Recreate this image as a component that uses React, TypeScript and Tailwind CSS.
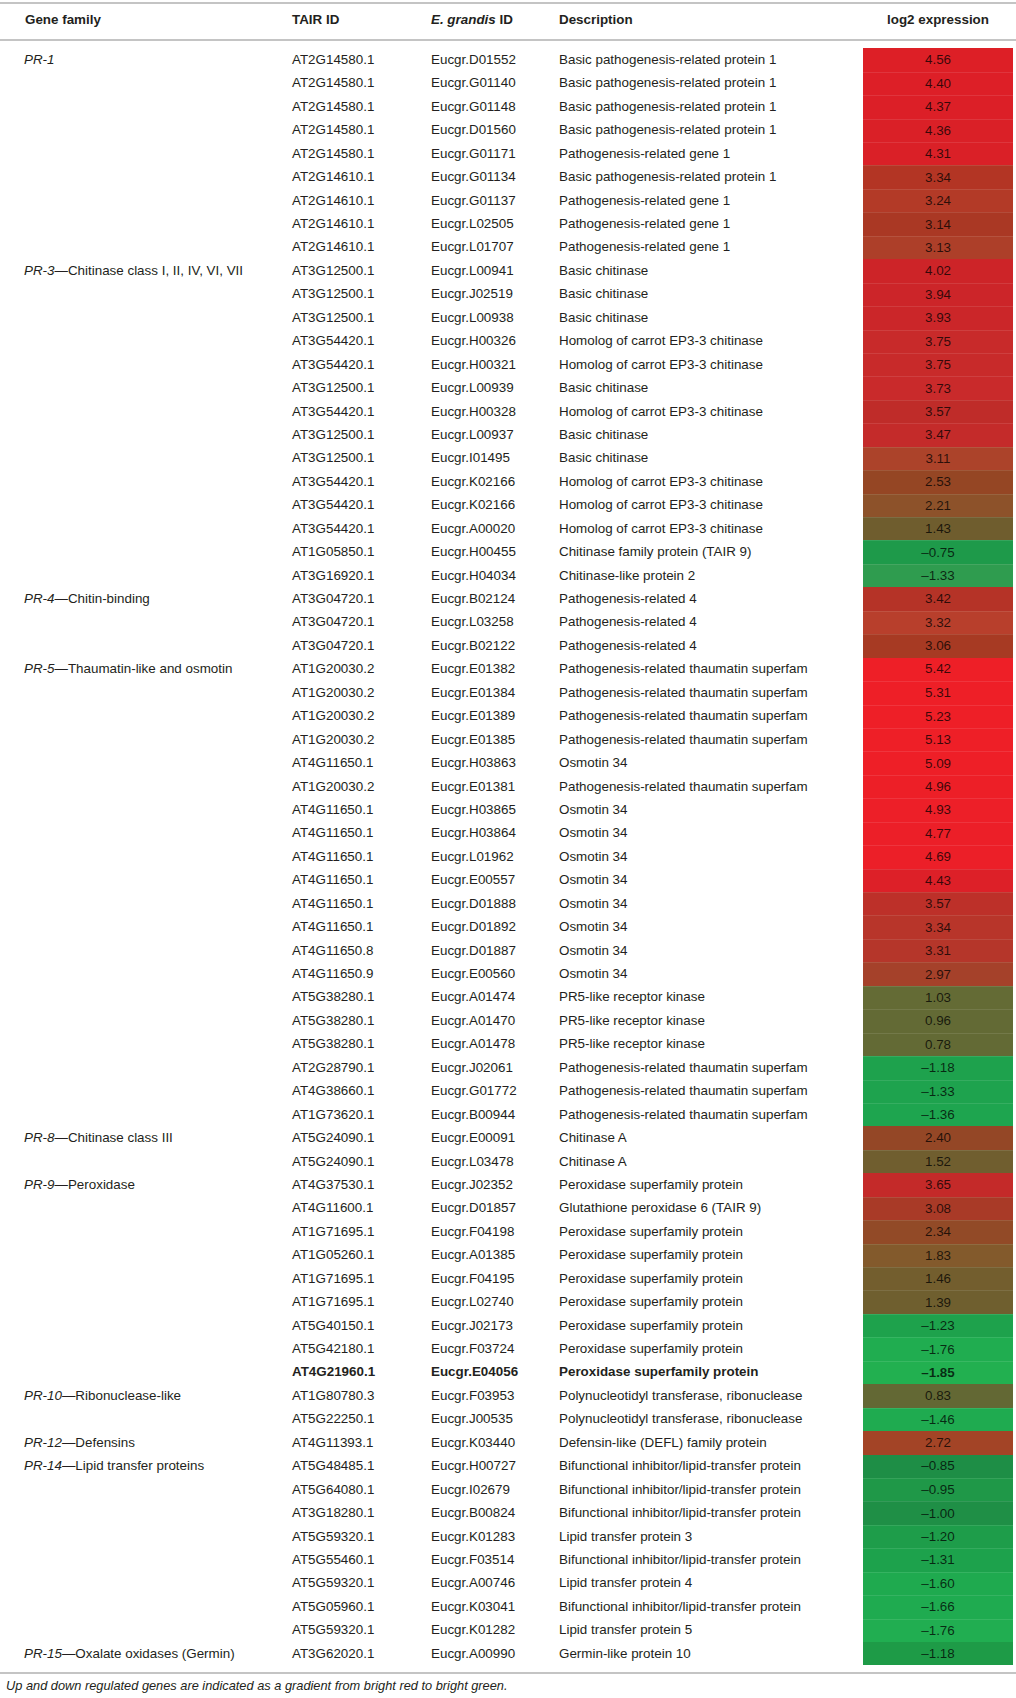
type Row = [string, string, string, string, string, boolean?];

type Group = { code: string; name?: string; rows: Row[] };

const PTS = "Pathogenesis-related thaumatin superfam";
const HOM = "Homolog of carrot EP3-3 chitinase";
const BIF = "Bifunctional inhibitor/lipid-transfer protein";
const PER = "Peroxidase superfamily protein";

const groups: Group[] = [
  {
    code: "PR-1",
    rows: [
      ["AT2G14580.1", "Eucgr.D01552", "Basic pathogenesis-related protein 1", "4.56", "#dd1f26"],
      ["AT2G14580.1", "Eucgr.G01140", "Basic pathogenesis-related protein 1", "4.40", "#dd1f27"],
      ["AT2G14580.1", "Eucgr.G01148", "Basic pathogenesis-related protein 1", "4.37", "#dc1f27"],
      ["AT2G14580.1", "Eucgr.D01560", "Basic pathogenesis-related protein 1", "4.36", "#da2027"],
      ["AT2G14580.1", "Eucgr.G01171", "Pathogenesis-related gene 1", "4.31", "#da2027"],
      ["AT2G14610.1", "Eucgr.G01134", "Basic pathogenesis-related protein 1", "3.34", "#b33524"],
      ["AT2G14610.1", "Eucgr.G01137", "Pathogenesis-related gene 1", "3.24", "#b33a27"],
      ["AT2G14610.1", "Eucgr.L02505", "Pathogenesis-related gene 1", "3.14", "#aa3824"],
      ["AT2G14610.1", "Eucgr.L01707", "Pathogenesis-related gene 1", "3.13", "#ad3f29"],
    ],
  },
  {
    code: "PR-3",
    name: "Chitinase class I, II, IV, VI, VII",
    rows: [
      ["AT3G12500.1", "Eucgr.L00941", "Basic chitinase", "4.02", "#cd2428"],
      ["AT3G12500.1", "Eucgr.J02519", "Basic chitinase", "3.94", "#cc2529"],
      ["AT3G12500.1", "Eucgr.L00938", "Basic chitinase", "3.93", "#cb2629"],
      ["AT3G54420.1", "Eucgr.H00326", HOM, "3.75", "#c82a2a"],
      ["AT3G54420.1", "Eucgr.H00321", HOM, "3.75", "#c82a2a"],
      ["AT3G12500.1", "Eucgr.L00939", "Basic chitinase", "3.73", "#c92a2b"],
      ["AT3G54420.1", "Eucgr.H00328", HOM, "3.57", "#bf2c29"],
      ["AT3G12500.1", "Eucgr.L00937", "Basic chitinase", "3.47", "#c42b2a"],
      ["AT3G12500.1", "Eucgr.I01495", "Basic chitinase", "3.11", "#ac432a"],
      ["AT3G54420.1", "Eucgr.K02166", HOM, "2.53", "#954624"],
      ["AT3G54420.1", "Eucgr.K02166", HOM, "2.21", "#8d522a"],
      ["AT3G54420.1", "Eucgr.A00020", HOM, "1.43", "#6f5d2e"],
      ["AT1G05850.1", "Eucgr.H00455", "Chitinase family protein (TAIR 9)", "–0.75", "#1e9a4a"],
      ["AT3G16920.1", "Eucgr.H04034", "Chitinase-like protein 2", "–1.33", "#2f9c4f"],
    ],
  },
  {
    code: "PR-4",
    name: "Chitin-binding",
    rows: [
      ["AT3G04720.1", "Eucgr.B02124", "Pathogenesis-related 4", "3.42", "#b53327"],
      ["AT3G04720.1", "Eucgr.L03258", "Pathogenesis-related 4", "3.32", "#b83f2c"],
      ["AT3G04720.1", "Eucgr.B02122", "Pathogenesis-related 4", "3.06", "#a73a23"],
    ],
  },
  {
    code: "PR-5",
    name: "Thaumatin-like and osmotin",
    rows: [
      ["AT1G20030.2", "Eucgr.E01382", PTS, "5.42", "#ee1f27"],
      ["AT1G20030.2", "Eucgr.E01384", PTS, "5.31", "#ee1f27"],
      ["AT1G20030.2", "Eucgr.E01389", PTS, "5.23", "#ee1f27"],
      ["AT1G20030.2", "Eucgr.E01385", PTS, "5.13", "#ee1f27"],
      ["AT4G11650.1", "Eucgr.H03863", "Osmotin 34", "5.09", "#ee1f27"],
      ["AT1G20030.2", "Eucgr.E01381", PTS, "4.96", "#ed1f27"],
      ["AT4G11650.1", "Eucgr.H03865", "Osmotin 34", "4.93", "#ed1f28"],
      ["AT4G11650.1", "Eucgr.H03864", "Osmotin 34", "4.77", "#ec1f28"],
      ["AT4G11650.1", "Eucgr.L01962", "Osmotin 34", "4.69", "#ec1f28"],
      ["AT4G11650.1", "Eucgr.E00557", "Osmotin 34", "4.43", "#dd2028"],
      ["AT4G11650.1", "Eucgr.D01888", "Osmotin 34", "3.57", "#bd3029"],
      ["AT4G11650.1", "Eucgr.D01892", "Osmotin 34", "3.34", "#b8352a"],
      ["AT4G11650.8", "Eucgr.D01887", "Osmotin 34", "3.31", "#b5362a"],
      ["AT4G11650.9", "Eucgr.E00560", "Osmotin 34", "2.97", "#a5412a"],
      ["AT5G38280.1", "Eucgr.A01474", "PR5-like receptor kinase", "1.03", "#646b35"],
      ["AT5G38280.1", "Eucgr.A01470", "PR5-like receptor kinase", "0.96", "#636a35"],
      ["AT5G38280.1", "Eucgr.A01478", "PR5-like receptor kinase", "0.78", "#636a35"],
      ["AT2G28790.1", "Eucgr.J02061", PTS, "–1.18", "#1ea24d"],
      ["AT4G38660.1", "Eucgr.G01772", PTS, "–1.33", "#1ea34e"],
      ["AT1G73620.1", "Eucgr.B00944", PTS, "–1.36", "#1ea54f"],
    ],
  },
  {
    code: "PR-8",
    name: "Chitinase class III",
    rows: [
      ["AT5G24090.1", "Eucgr.E00091", "Chitinase A", "2.40", "#944726"],
      ["AT5G24090.1", "Eucgr.L03478", "Chitinase A", "1.52", "#705e2f"],
    ],
  },
  {
    code: "PR-9",
    name: "Peroxidase",
    rows: [
      ["AT4G37530.1", "Eucgr.J02352", PER, "3.65", "#c42a29"],
      ["AT4G11600.1", "Eucgr.D01857", "Glutathione peroxidase 6 (TAIR 9)", "3.08", "#a93a27"],
      ["AT1G71695.1", "Eucgr.F04198", PER, "2.34", "#924a27"],
      ["AT1G05260.1", "Eucgr.A01385", PER, "1.83", "#835a2c"],
      ["AT1G71695.1", "Eucgr.F04195", PER, "1.46", "#735e2e"],
      ["AT1G71695.1", "Eucgr.L02740", PER, "1.39", "#6f5f2f"],
      ["AT5G40150.1", "Eucgr.J02173", PER, "–1.23", "#1ea24c"],
      ["AT5G42180.1", "Eucgr.F03724", PER, "–1.76", "#20ad50"],
      ["AT4G21960.1", "Eucgr.E04056", PER, "–1.85", "#22b050", true],
    ],
  },
  {
    code: "PR-10",
    name: "Ribonuclease-like",
    rows: [
      ["AT1G80780.3", "Eucgr.F03953", "Polynucleotidyl transferase, ribonuclease", "0.83", "#636834"],
      ["AT5G22250.1", "Eucgr.J00535", "Polynucleotidyl transferase, ribonuclease", "–1.46", "#1fab50"],
    ],
  },
  {
    code: "PR-12",
    name: "Defensins",
    rows: [["AT4G11393.1", "Eucgr.K03440", "Defensin-like (DEFL) family protein", "2.72", "#a34426"]],
  },
  {
    code: "PR-14",
    name: "Lipid transfer proteins",
    rows: [
      ["AT5G48485.1", "Eucgr.H00727", BIF, "–0.85", "#1e8e46"],
      ["AT5G64080.1", "Eucgr.I02679", BIF, "–0.95", "#1f9848"],
      ["AT3G18280.1", "Eucgr.B00824", BIF, "–1.00", "#1f8f46"],
      ["AT5G59320.1", "Eucgr.K01283", "Lipid transfer protein 3", "–1.20", "#1e9d4a"],
      ["AT5G55460.1", "Eucgr.F03514", BIF, "–1.31", "#1da24c"],
      ["AT5G59320.1", "Eucgr.A00746", "Lipid transfer protein 4", "–1.60", "#1faa4f"],
      ["AT5G05960.1", "Eucgr.K03041", BIF, "–1.66", "#1fab50"],
      ["AT5G59320.1", "Eucgr.K01282", "Lipid transfer protein 5", "–1.76", "#21ae51"],
    ],
  },
  {
    code: "PR-15",
    name: "Oxalate oxidases (Germin)",
    rows: [["AT3G62020.1", "Eucgr.A00990", "Germin-like protein 10", "–1.18", "#1e9b47"]],
  },
];

const cols = "grid grid-cols-[292px_139px_128px_304px_150px]";

export default function App() {
  return (
    <div
      className="w-[1016px] h-[1698px] bg-white text-[#231f20] text-[13.4px] overflow-hidden"
      style={{ fontFamily: '"Liberation Sans", Arial, sans-serif' }}
    >
      <div className="mt-[2px] border-t-2 border-[#c4c4c4]" />

      {/* Header */}
      <div className={`${cols} h-[35px] items-center pb-[2px] font-bold`}>
        <div className="pl-[25px]">Gene family</div>
        <div>TAIR ID</div>
        <div>
          <span className="italic">E. grandis</span> ID
        </div>
        <div>Description</div>
        <div className="text-center">log2 expression</div>
      </div>
      <div className="border-t-2 border-[#c4c4c4]" />

      {/* Body */}
      <div className="mt-[7.3px]">
        {groups.map((g) =>
          g.rows.map((r, i) => (
            <div key={g.code + i} className={`${cols} h-[23.45px] items-center ${r[5] ? "font-bold" : ""}`}>
              <div className="pl-[24px] whitespace-nowrap">
                {i === 0 && (
                  <>
                    <span className="italic">{g.code}</span>
                    {g.name && <>—{g.name}</>}
                  </>
                )}
              </div>
              <div>{r[0]}</div>
              <div>{r[1]}</div>
              <div className="whitespace-nowrap">{r[2]}</div>
              <div
                className={`h-full flex items-center justify-center text-black/75 ${i > 0 ? "border-t border-white/10" : ""}`}
                style={{ backgroundColor: r[4] }}
              >
                {r[3]}
              </div>
            </div>
          ))
        )}
      </div>

      <div className="mt-[6.7px] border-t-2 border-[#c4c4c4]" />
      <p className="mt-[4px] pl-[6px] italic text-[12.8px] leading-[15px]">
        Up and down regulated genes are indicated as a gradient from bright red to bright green.
      </p>
    </div>
  );
}
